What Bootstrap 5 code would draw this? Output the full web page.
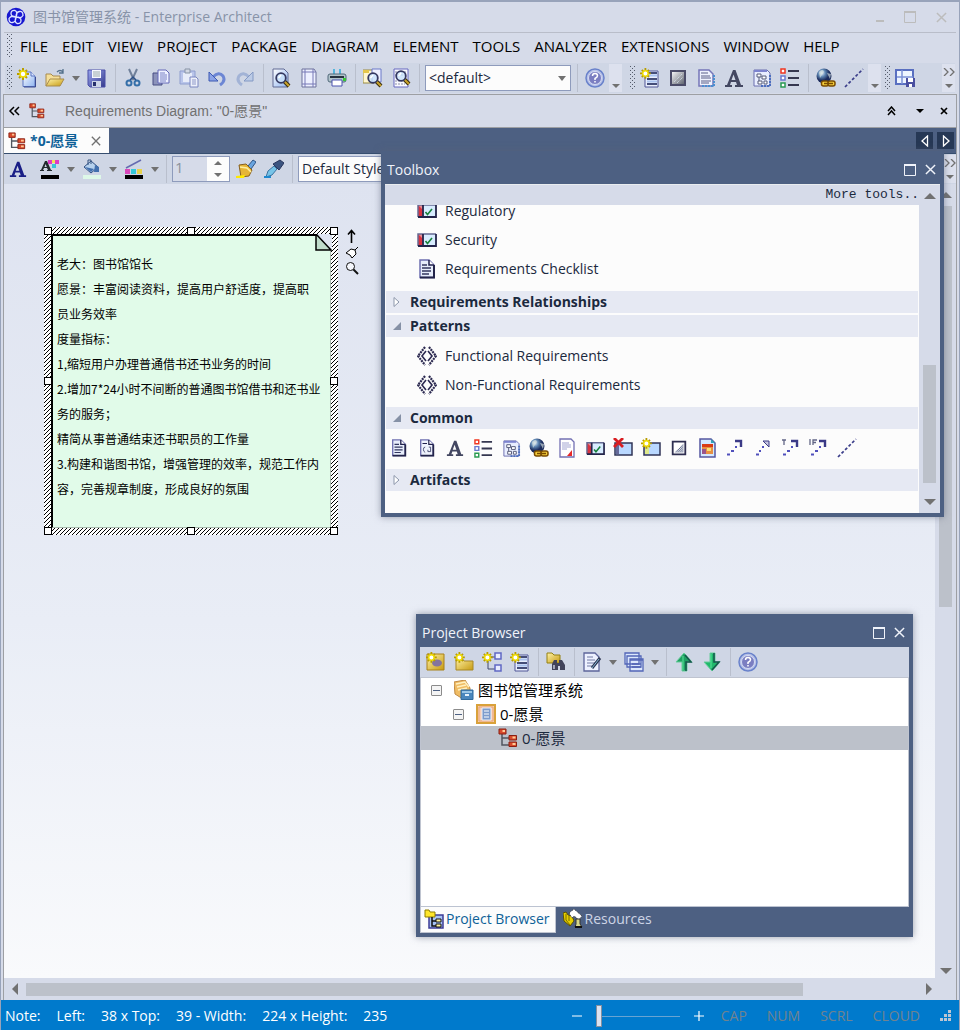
<!DOCTYPE html>
<html lang="zh-CN">
<head>
<meta charset="utf-8">
<meta name="viewport" content="width=device-width, initial-scale=1">
<title>图书馆管理系统 - Enterprise Architect</title>
<link href="https://cdn.jsdelivr.net/npm/bootstrap@5.3.0/dist/css/bootstrap.min.css" rel="stylesheet">
<style>
:root{--navy:#4d6082;--bar:#d6dbe9;--tool:#cfd6e5;--ink:#1b293e;--thumb:#bcc1ca;--line:#8e9bbc}
body{font-family:"Open Sans","Noto Sans CJK SC",sans-serif;font-size:14px;line-height:20px;color:#000;background:var(--bar);min-height:100vh;border:solid #98a3ba;border-width:2px 1px 0}
a{color:inherit;text-decoration:none}
button{font:inherit;color:inherit;padding:0;border:0;background:none;display:flex;align-items:center;justify-content:center}
svg{display:block;flex:none}
.ico{width:20px;height:20px}
.app-title{height:30px;padding:0 9px 0 2px;color:#8893a8;gap:7px;margin:0 3px}
.app-title button{color:#bcbcbc}
.title-btns{gap:20px}
.menu-bar{height:29px;margin:0 3px;border-top:1px solid #b9bdc9;padding:0 0 2px 3px;font-size:15px}
.menu-bar a{margin-right:14px}
.menu-bar .grip{margin-right:7px}
.grip{width:6px;height:24px;background:url("data:image/svg+xml,%3Csvg xmlns='http://www.w3.org/2000/svg' width='4' height='4'%3E%3Cpath fill='%23555c6b' d='M0 0h1v1H0zM2 2h1v1H2z'/%3E%3C/svg%3E");flex:none}
.tool-bar{height:30px;background:var(--tool)}
.main-tools{margin:2px 4px 1px;padding-left:2px}
.tb{width:28px;height:26px;flex:none}
.arr{width:14px;height:26px;flex:none}
.arr::after,.combo::after{content:"";border:4px solid transparent;border-top:5px solid #717171;border-bottom:0}
.vsep{width:8px;height:28px;flex:none;background:linear-gradient(#b9bfcd,#b9bfcd) center/1px 100% no-repeat}
.over{width:13px;height:28px;background:#dde1ee;flex:none;flex-direction:column;justify-content:space-between;padding:4px 0}
.combo{position:relative;margin:0 2px}
.combo::after{position:absolute;right:5px;top:11px}
.combo select{appearance:none;width:100%;height:26px;border:1px solid var(--line);background:#fcfcfc;color:var(--ink);padding:0 3px;border-radius:0;line-height:20px}
.crumb{height:34px;margin:0 2px 0 2px;border:1px solid #9d9fa3;font-family:"Liberation Sans","Noto Sans CJK SC",sans-serif;color:#717171}
.crumb button{color:#000;height:24px}
.work{margin:0 2px;border-left:1px solid #9d9fa3;border-right:1px solid #9d9fa3}
.tab-strip{height:26px;background:var(--navy);border-bottom:1px solid #364e6f;padding-right:2px}
.doc-tab{height:25px;width:105px;background:#fcfcfc;color:#0e6198;font-weight:bold}
.tab-nav{width:17px;height:17px;background:#263855}
.canvas{background:linear-gradient(#dee3f0,#e9edf6 55%,#f9fafc);min-height:600px;padding:43px 40px}
.note-frame{position:relative;width:294px;padding:7px;background:url("data:image/svg+xml,%3Csvg xmlns='http://www.w3.org/2000/svg' width='4' height='4'%3E%3Crect width='4' height='4' fill='white'/%3E%3Cpath d='M3 0h1v1H3zM2 1h1v1H2zM1 2h1v1H1zM0 3h1v1H0z'/%3E%3C/svg%3E")}
.note-body{background:#e1fbe9;border:1px solid #a8b9ae;border-left:2px solid #000;border-top:2px solid #000;padding:15px 0 26px 4px;font-size:12px;line-height:25px;white-space:nowrap;font-family:"Noto Sans CJK SC",sans-serif}
.fold{position:absolute;right:6px;top:7px}
.knob{position:absolute;width:8px;height:8px;background:#fff;border:1px solid #000}
.n{top:0}.s{bottom:0}.w{left:0}.e{right:0}.cx{left:calc(50% - 4px)}.cy{top:calc(50% - 4px)}
.quick{margin-left:7px;gap:2px;padding-top:2px}
.sbar{background:var(--bar);color:#717171;flex:none}
.sbar i{background:var(--thumb);display:block}
.win{position:absolute;background:var(--navy);padding:0 4px 4px;box-shadow:0 0 7px #5a637799;display:flex;flex-direction:column}
.win-title{height:33px;color:#f0f3fa;padding-left:2px;flex:none}
.win-title button{width:20px;height:20px}
.toolbox{left:377px;right:12px;top:23px;height:366px}
.browser{left:412px;width:497px;top:486px;height:323px}
.tools-head{height:20px;z-index:1;background:var(--bar);font-family:"Liberation Mono",monospace;font-size:13px;color:var(--ink)}
.first-group{margin-top:-9px}
.group-head{height:22px;background:#e6e9f3;font-weight:bold;margin:0 1px 2px;gap:9px;padding:0 0 1px 7px}
.group-head svg{width:8px;height:12px;overflow:visible}
.stencil{height:29px;gap:8px;padding-left:32px}
.common-row{height:34px}
.tree{background:#fff;border:1px solid #bfc4d0;border-bottom-color:#bcc3d1}
.tree-row{height:24px;font-size:15px}
.minus{width:11px;height:11px;border:1px solid #8b8b8b;border-radius:1px;background:linear-gradient(var(--navy),var(--navy)) center/7px 1px no-repeat,#f4f4f4}
.win-tab{height:26px;padding:0 5px 2px 3px;gap:2px;color:#cdd5e6}
.win-tab.on{background:#fcfcfc;color:#0e6198;border:1px solid #bfc4d0;border-top:0}
.status{height:30px;background:#007acc;color:#fff;padding:2px 0 0 5px;margin:0 -1px}
.lock{color:#71838f;gap:20px;margin:0 20px 0 17px}
.zoom{appearance:none;width:84px;height:22px;background:linear-gradient(#68a4d2,#68a4d2) center/100% 1px no-repeat;margin:0 14px}
.zoom::-webkit-slider-thumb{appearance:none;width:6px;height:22px;background:#dce2f0;border:1px solid #858f9f;border-radius:0}
.spin{width:58px;height:26px;border:1px solid var(--line);background:#fcfcfc;margin:0 2px}
.spin input{width:34px;border:0;background:var(--bar);color:#8c929c;padding:0 0 4px 2px;font-size:15px;line-height:20px;border-radius:0}
</style>
</head>
<body class="d-flex flex-column">
<svg width="0" height="0" class="position-absolute" aria-hidden="true">
<defs>
<linearGradient id="gb" x2="1" y2="1"><stop stop-color="#fff"/><stop offset="1" stop-color="#8fb4f0"/></linearGradient>
<linearGradient id="gv" x2="1" y2="1"><stop stop-color="#9aa6ee"/><stop offset="1" stop-color="#34398c"/></linearGradient>
<linearGradient id="gy" x2="1" y2="1"><stop stop-color="#fff3a8"/><stop offset="1" stop-color="#c79b12"/></linearGradient>
<linearGradient id="gg" x2="1" y2="1"><stop stop-color="#fff"/><stop offset="1" stop-color="#555a66"/></linearGradient>
<radialGradient id="gl" cx=".35" cy=".3"><stop stop-color="#e8f2ff"/><stop offset=".5" stop-color="#5c84b0"/><stop offset="1" stop-color="#1b2b5c"/></radialGradient>
<pattern id="dots" width="2" height="2" patternUnits="userSpaceOnUse"><path d="M0 0h1v1H0zM1 1h1v1H1z" fill="#4e5b80"/></pattern>
</defs>
<symbol id="star" viewBox="0 0 20 20"><path d="M6 0v12M0 6h12M2 2l8 8M10 2l-8 8" stroke="#b89e00" stroke-width="2"/><circle cx="6" cy="6" r="3" fill="#fff" stroke="#f0dc00" stroke-width="1.6"/></symbol>
<symbol id="new" viewBox="0 0 20 20"><path d="M6 4h8l4 4v10.500H6z" fill="url(#gb)" stroke="#5a74c0"/><path d="M14 4v4h4" fill="#dbe6ff" stroke="#5a74c0"/><path d="M18.500 9v10H7" fill="none" stroke="#3a4a90"/><use href="#star" width="20" height="20"/></symbol>
<symbol id="open" viewBox="0 0 20 20"><path d="M1 18V6h5l2 2h7v3" fill="#f5df9a" stroke="#a88b4c"/><path d="M1 18l4-7h14l-4 7z" fill="url(#gy)" stroke="#a88b4c"/><path d="M12 4q3-3 6 0m0-3v4h-4" fill="none" stroke="#53708b" stroke-width="1.300"/></symbol>
<symbol id="save" viewBox="0 0 20 20"><path d="M1 2h17v17H3l-2-2z" fill="url(#gv)" stroke="#4a4fa8"/><path d="M5 2h9v8H5z" fill="#f6f8ff"/><path d="M6 4h7M6 6h7M6 8h7" stroke="#9aa"/><path d="M5 13h9v6H5z" fill="#cdd5e8"/><path d="M6 14h3v4H6z" fill="#27306d"/></symbol>
<symbol id="cut" viewBox="0 0 20 20"><path d="M6 1l5 11M14 1L9 12" stroke="#70809a" stroke-width="2"/><circle cx="6" cy="15" r="2.500" fill="none" stroke="#356fa9" stroke-width="2"/><circle cx="14" cy="15" r="2.500" fill="none" stroke="#356fa9" stroke-width="2"/><path d="M7 12l3-3 3 3" stroke="#2c4f86" fill="none" stroke-width="1.500"/></symbol>
<symbol id="copy" viewBox="0 0 20 20"><path d="M2 5h9v12H2z" fill="#8c93bb" stroke="#464c82"/><path d="M7 2h8l3 3v10H7z" fill="#eef1ff" stroke="#6468b8"/><path d="M9 5h5M9 7h7M9 9h7M9 11h7M9 13h6" stroke="#7881c5"/></symbol>
<symbol id="paste" viewBox="0 0 20 20"><path d="M1 3h15v13H1z" fill="#b9c5ea" stroke="#8f9ecf"/><path d="M4 5h9v9H4z" fill="#e7ecf9"/><path d="M6 1h5v4H6z" fill="#d2d8e4" stroke="#8793a5"/><path d="M11 9h6l2 2v8h-8z" fill="#edf0fa" stroke="#7a86c0"/><path d="M13 12h4M13 14h4M13 16h4" stroke="#8d97c8"/></symbol>
<symbol id="undo" viewBox="0 0 20 20"><path d="M6 9Q12 3 16 8q3 5-3 9" fill="none" stroke="#6c86d4" stroke-width="3"/><path d="M2 4v9h9z" fill="#8ba3e6" stroke="#3d59b2"/></symbol>
<symbol id="redo" viewBox="0 0 20 20"><path d="M14 9Q8 3 4 8q-3 5 3 9" fill="none" stroke="#a2b3d6" stroke-width="3"/><path d="M18 4v9H9z" fill="#bccbe6" stroke="#8398c4"/></symbol>
<symbol id="lens" viewBox="0 0 20 20"><path d="M13 13l5 5" stroke="#3c3010" stroke-width="4"/><path d="M13 13l5 5" stroke="#c9a32b" stroke-width="2"/><circle cx="10" cy="10" r="4.800" fill="#c8e2fbcc" stroke="#353860" stroke-width="1.800"/><path d="M7.500 10l2.500-3" stroke="#fff" stroke-width="1.500"/></symbol>
<symbol id="preview" viewBox="0 0 20 20"><path d="M2 1h11l4 4v14H2z" fill="url(#gb)" stroke="#606a94"/><use href="#lens" width="20" height="20"/></symbol>
<symbol id="page" viewBox="0 0 20 20"><path d="M3 1h12l2 3v15H3z" fill="#edf0ff" stroke="#6d719a"/><path d="M6 1v18M14 1v18M3 4h14M3 16h14" stroke="#7779b6"/></symbol>
<symbol id="print" viewBox="0 0 20 20"><path d="M6 1h2v6H6zM12 1h2v6h-2z" fill="#54b5dc"/><rect x="1" y="6" width="18" height="8" rx="2" fill="#b0c2ca" stroke="#50697a"/><path d="M3 8h14v2H3z" fill="#26323e"/><path d="M5 12h10v6H5z" fill="#fff" stroke="#4c55b0"/><path d="M16 10h3v3h-3z" fill="#36c834"/></symbol>
<symbol id="find" viewBox="0 0 20 20"><path d="M0 2h11v13H0z" fill="#fff7d0" stroke="#9a8a40"/><path d="M0 2h6v3H0z" fill="#e4c64b"/><path d="M9 1h9v13H9z" fill="#eef0ff" stroke="#6b78c8"/><use href="#lens" width="20" height="20"/></symbol>
<symbol id="finddoc" viewBox="0 0 20 20"><path d="M3 1h14v18H3z" fill="#fafaff" stroke="#6668c0"/><path d="M4 4h12M4 7h12M4 13h12M4 16h10" stroke="#8c90a8" stroke-dasharray="2 1"/><use href="#lens" width="20" height="20" y="-2"/></symbol>
<symbol id="help" viewBox="0 0 20 20"><circle cx="10" cy="10" r="9" fill="#b9c2e7" stroke="#6982cb" stroke-width="1.500"/><circle cx="10" cy="10" r="6.500" fill="#7b7ec1" stroke="#d4ddf5"/><path d="M7.500 8q0-2.500 2.500-2.500t2.500 2.300Q12.500 9 10 10.500V12m0 1v1.600" fill="none" stroke="#fff" stroke-width="1.500"/></symbol>
<symbol id="newlist" viewBox="0 0 20 20"><path d="M6 3h12v16H5V3z" fill="#e9eefc" stroke="#505797"/><path d="M7 5h10M7 11h10M7 16h10" stroke="#454d78" stroke-width="2"/><path d="M7 7.500h10M7 13.500h10" stroke="#a9c2ef" stroke-width="2"/><use href="#star" width="18" height="18"/></symbol>
<symbol id="shade" viewBox="0 0 20 20"><path d="M3 3h14v14H3z" fill="url(#gg)" stroke="#4b4c68" stroke-width="2"/><path d="M6 14l8-8M9 15l6-6" stroke="#d9e7f2" stroke-dasharray="1 1"/></symbol>
<symbol id="shadedot" viewBox="0 0 20 20"><path d="M3 3h14v14H3z" fill="#fff" stroke="#2e2e50" stroke-width="2"/><path d="M5 15L15 5v10z" fill="url(#dots)"/></symbol>
<symbol id="doc" viewBox="0 0 20 20"><path d="M3 2h10l4 4v12H3z" fill="#eef1fd" stroke="#7676b8" stroke-width="1.500"/><path d="M18 7v11H5" fill="none" stroke="#4b8fd0" stroke-width="2" stroke-dasharray="2 1"/><path d="M5 5h7M5 8h9M5 10h10M5 13h10M5 15h8" stroke="#5a5f87"/></symbol>
<symbol id="A" viewBox="0 0 20 20"><path fill-rule="evenodd" d="M9 2h2.500L17 17h2v2h-8v-2h2l-1-3H7l-1 3h2v2H1v-2h2zM7.500 12h4L9.500 6.500z" fill="currentColor"/></symbol>
<symbol id="diag" viewBox="0 0 20 20"><path d="M2 2h13l3 3v13H2z" fill="#e9eeff" stroke="#6b6eae"/><path d="M2 3h13" stroke="#7d84cf" stroke-width="2"/><path d="M18 7v11H9" fill="none" stroke="#4b6fc0" stroke-width="2" stroke-dasharray="2 1"/><path d="M5 6h4v3H5zM10 8h4v3h-4zM6 13h4v3H6zM12 13h3v3h-3zM7 9v4" fill="#fff" stroke="#555a78"/></symbol>
<symbol id="legend" viewBox="0 0 20 20"><path d="M1 1h4v4H1z" fill="#fff" stroke="#f03620" stroke-width="1.500"/><path d="M1 8h4v4H1z" fill="#fff" stroke="#6b79ce" stroke-width="1.500"/><path d="M1 15h4v4H1z" fill="#fff" stroke="#2a9b51" stroke-width="1.500"/><path d="M8 3h11M8 10h11M8 17h11" stroke="#353750" stroke-width="2"/></symbol>
<symbol id="globe" viewBox="0 0 20 20"><circle cx="8" cy="8" r="7.500" fill="url(#gl)"/><path d="M3 4q4-4 5 0l-4 6zM11 5l4 1-1 5z" fill="#d5e2de" opacity=".65"/><rect x="5.500" y="13" width="7" height="5" rx="2" fill="#f3cb38" stroke="#7a4c00" stroke-width="1.500"/><rect x="12" y="13" width="7" height="5" rx="2" fill="#f3cb38" stroke="#7a4c00" stroke-width="1.500"/><path d="M8 15.500h9" stroke="#7a4c00" stroke-width="1.500"/></symbol>
<symbol id="dash" viewBox="0 0 20 20"><path d="M1 19L19 1" stroke="#3b3e8a" stroke-width="1.700" stroke-dasharray="3 2"/></symbol>
<symbol id="layout" viewBox="0 0 20 20"><path d="M1 2h17v14H1z" fill="#eef5ff" stroke="#596fc0" stroke-width="2"/><path d="M7 2v14M2 9h16" stroke="#7d93d8" stroke-width="1.500"/><path d="M11 10h9v9h-9z" fill="#4a4fa0"/><path d="M13 10h5v4h-5zM14 16h3v3h-3z" fill="#fff"/></symbol>
<symbol id="hier" viewBox="0 0 20 20"><path d="M4 6v11h7M4 10h7" stroke="#51565f" stroke-width="1.500" fill="none"/><g fill="#d84a2c" stroke="#8a1f12"><path d="M1 1h7v5H1zM11 7.500h7.500v4.500H11zM11 14h7.500v4.500H11z"/></g><path d="M4.500 2H7v2H4.500zM14.500 8.500h3v2h-3zM14.500 15h3v2h-3z" fill="#ffc996"/></symbol>
<symbol id="bar" viewBox="0 0 20 20"><path d="M1 4h18v12H1z" fill="#d8ecff"/><path d="M1 4h4.500v12H1z" fill="#d93340"/><path d="M1 4h5v5z" fill="#e68e98"/><path d="M1 16V4h18" fill="none" stroke="#666a92" stroke-width="1.500"/><path d="M19 4v12H1M6 4v12" fill="none" stroke="#23244a" stroke-width="1.800"/><path d="M8.500 11l2 2.500L15 8" fill="none" stroke="#16803a" stroke-width="1.600"/></symbol>
<symbol id="check" viewBox="0 0 20 20"><path d="M3 1h9l5 5v12.500H3z" fill="#e7edfb" stroke="#6e6fb0" stroke-width="1.500"/><path d="M17 6v12.500H3" fill="none" stroke="#23244a" stroke-width="2"/><path d="M12 1v5h5" fill="#fff" stroke="#20214c" stroke-width="1.500"/><path d="M5 6h5M5 9h9M5 12h9M5 15h7" stroke="#33365f" stroke-width="1.300"/></symbol>
<symbol id="docx" viewBox="0 0 20 20"><path d="M3 1h9l5 5v12.500H3z" fill="#eff3fd" stroke="#6e6fb0" stroke-width="1.500"/><path d="M17 6v12.500H3" fill="none" stroke="#23244a" stroke-width="2"/><path d="M12 1v5h5M5 5h5" fill="#fff" stroke="#20214c" stroke-width="1.300"/><path d="M8 9q-2 0-2 2.500T8 15M12 9h2v5h-3v-2" fill="none" stroke="#45496e"/></symbol>
<symbol id="pattern" viewBox="0 0 20 20"><path d="M8 1L1 10l7 9M12 1l7 9-7 9" fill="none" stroke="#2b2950" stroke-width="2.200" stroke-dasharray="2 .8"/><path d="M9 5l-4 5 4 5M11 5l4 5-4 5" fill="none" stroke="#2b2950" stroke-width="1.600"/></symbol>
<symbol id="pdf" viewBox="0 0 20 20"><path d="M3 1h11l3 3v15H3z" fill="#fff" stroke="#7370b3" stroke-width="1.300"/><path d="M5 5h7M5 7h9M5 9h9M5 11h5" stroke="#a2a5d2"/><path d="M10 18l5-6v6z" fill="#e62828"/></symbol>
<symbol id="change" viewBox="0 0 20 20"><path d="M2 5h17v12H2z" fill="#b9d8ff" stroke="#303557" stroke-width="1.500"/><path d="M3 6h3v10H3z" fill="#666a9a"/><path d="M1 0l9 9M10 0L1 9" stroke="#d81d21" stroke-width="2.800"/></symbol>
<symbol id="issue" viewBox="0 0 20 20"><path d="M3 5h16v12H3z" fill="#b9d8ff" stroke="#303557" stroke-width="1.500"/><path d="M4 8h4v8H4z" fill="#dfe98a"/><use href="#star" width="18" height="18"/></symbol>
<symbol id="pic" viewBox="0 0 20 20"><path d="M3 1h11l4 4v14H3z" fill="#d3e9ff" stroke="#5557a0" stroke-width="1.500"/><path d="M5 6h11v10H5z" fill="#e89042"/><path d="M5 6h11v3H5z" fill="#d93c13"/><path d="M5 11h4v5H5z" fill="#99558a"/><path d="M10 10h4v3h-4z" fill="#f8e173"/><path d="M14 1v4h4z" fill="#35a5b8"/></symbol>
<symbol id="link" viewBox="0 0 20 20"><path d="M2 16.500h3M6 13h3M10 9h2" stroke="#5050bc" stroke-width="2.200"/><path d="M10 3h6v6" fill="none" stroke="#3b3a86" stroke-width="2.400"/></symbol>
<symbol id="linkopen" viewBox="0 0 20 20"><path d="M3 16.500h3M6 13h2M9 9h2" stroke="#5050bc" stroke-width="2"/><path d="M10 3h6v6z" fill="#c6c6df" stroke="#3b3a86"/></symbol>
<symbol id="t" viewBox="0 0 20 20"><path d="M1 2h4M3 2v5" stroke="#626686" stroke-width="1.300"/><use href="#link" width="20" height="20"/></symbol>
<symbol id="if" viewBox="0 0 20 20"><path d="M1 1v6M4 7V2h4M4 4.500h3" fill="none" stroke="#626686" stroke-width="1.300"/><use href="#link" width="20" height="20"/></symbol>
<symbol id="model" viewBox="0 0 20 20"><path d="M1 2h17v16H1z" fill="url(#gy)" stroke="#aa8118"/><ellipse cx="11" cy="11" rx="5" ry="3.500" fill="#84749e"/><use href="#star" width="18" height="18"/></symbol>
<symbol id="pkg" viewBox="0 0 20 20"><path d="M2 18V6h6l2 3h9v9z" fill="url(#gy)" stroke="#a98825"/><use href="#star" width="18" height="18"/></symbol>
<symbol id="newdiag" viewBox="0 0 20 20"><path d="M6 9v8h7M8 5h5" fill="none" stroke="#41496c"/><path d="M13 1h6v6h-6zM13 13h6v6h-6z" fill="#e9edff" stroke="#6068c4" stroke-width="1.500"/><use href="#star" width="18" height="18"/></symbol>
<symbol id="bino" viewBox="0 0 20 20"><path d="M1 11V1h5l2 2h6v8z" fill="url(#gy)" stroke="#948011"/><path d="M6 18V12l2-4h3v3h2V8h3l3 5v5h-5v-4h-2v4z" fill="#41435a"/><path d="M7 13h2v4H7z" fill="#a2a7ba"/></symbol>
<symbol id="edit" viewBox="0 0 20 20"><path d="M2 1h11l4 4v14H2z" fill="#edf1ff" stroke="#5d659a" stroke-width="1.300"/><path d="M5 5h6M5 8h8M5 11h8M5 14h6" stroke="#727aa4"/><path d="M10 16l8-10" stroke="#2d3652" stroke-width="3"/><path d="M10 16l7-9" stroke="#85b4d2"/></symbol>
<symbol id="wins" viewBox="0 0 20 20"><g fill="#dbe7fc" stroke="#5366b7" stroke-width="1.300"><path d="M1 1h14v11H1zM3 4h14v11H3zM6 7h13v12H6z"/></g><path d="M6 8h13M8 12h9M8 15h9" stroke="#5366b7" stroke-width="1.600"/></symbol>
<symbol id="up" viewBox="0 0 20 20"><path d="M10 1l8 9h-5v9H8v-9H2z" fill="#20a163" stroke="#67cd9b"/><path d="M11 3l6 7h-5v9" fill="none" stroke="#16564c" stroke-width="1.500"/><path d="M9 4v14" stroke="#5be49b"/></symbol>
<symbol id="down" viewBox="0 0 20 20"><path d="M10 19l8-9h-5V1H8v9H2z" fill="#20b96b" stroke="#67cd9b"/><path d="M10 18l7-8h-5V1" fill="none" stroke="#16564c" stroke-width="1.500"/><path d="M9 2v14" stroke="#5be49b"/></symbol>
<symbol id="cabinet" viewBox="0 0 20 20"><path d="M0 2l11-2 5 8v3H9v8L1 14z" fill="#f0bd65" stroke="#c08a42"/><path d="M2 4l9-2 4 5M3 7l9-2M4 10l9-2" fill="none" stroke="#fff0c0" stroke-width="1.500"/><path d="M7 10h12v9.500H7z" fill="#4a87bd" stroke="#316b9c"/><path d="M8 11h10v2H8z" fill="#9ac6e6"/><path d="M11 14h4v2h-4z" fill="#e5f2fb"/></symbol>
<symbol id="view" viewBox="0 0 20 20"><path d="M1 1h18v18H1z" fill="#f7cba8" stroke="#d9a13a" stroke-width="2"/><path d="M3 3h14v14H3z" fill="#f9cdb4" stroke="#e7a57b"/><path d="M6 4h9v12H6z" fill="#7d9ccc" stroke="#e9f0fa"/><path d="M8 7h5M8 10h5M8 13h5" stroke="#fff"/></symbol>
<symbol id="ptab" viewBox="0 0 20 20"><path d="M5 6h14v13H5z" fill="#a8c4f5" stroke="#3c3b95" stroke-width="1.500"/><path d="M1 8V1h4l1 2h5v5z" fill="#ffe62a" stroke="#8f7e00"/><path d="M8 8v9h6M8 12h6" stroke="#101010" fill="none" stroke-width="1.500"/><path d="M12 10h5v3h-5zM12 15h5v3h-5z" fill="#fff5a0" stroke="#111"/></symbol>
<symbol id="res" viewBox="0 0 20 20"><path d="M0 4l3-1 2 3 4 1 2 5-4 5-6-5z" fill="#e6cf00" stroke="#5c5200"/><path d="M3 5v6l4 5M6 7v5" stroke="#7c6c00" fill="none"/><path d="M6 4l5-4 8 7-3 4-5-4-2 2z" fill="#fff" stroke="#333" stroke-dasharray="1 1"/><path d="M13 10h4v5l2 3h-7l1-3z" fill="#d5d68a" stroke="#333"/><path d="M12 18h7" stroke="#111" stroke-width="2"/></symbol>
<symbol id="fontcol" viewBox="0 0 20 20"><path fill-rule="evenodd" d="M5 2h2l4 9h1v1H7v-1h1l-1-2H4l-1 2h1v1H0v-1h1zM4.500 8h2.300L5.600 5z" fill="#222a2d"/><path d="M8 1h4v4H8zM15 1h4v4h-4z" fill="#dc3bc6"/><path d="M12 5h4v4h-4z" fill="#38c5d7"/><path d="M12 1h3v3h-3z" fill="#f3df51"/><path d="M1 16h18v4H1z" fill="#000"/></symbol>
<symbol id="fill" viewBox="0 0 20 20"><path d="M2 8l7-6 7 6-7 6z" fill="#b6d1ed" stroke="#315082"/><path d="M3 8l6 5 3-3zM13 6l4 2v5h-5z" fill="#416fae"/><path d="M6 6V1h3v4" fill="none" stroke="#34537e"/><path d="M1 16h18v4H1z" fill="#def8e8"/></symbol>
<symbol id="linecol" viewBox="0 0 20 20"><path d="M2 9L17 1" stroke="#656ab1" stroke-width="1.500"/><path d="M1 10h5v5H1z" fill="#d948ba"/><path d="M7 10h5v5H7z" fill="#35c8d9"/><path d="M13 10h5v5h-5z" fill="#e6d24c"/><path d="M1 16h18v4H1z" fill="#000"/></symbol>
<symbol id="brush" viewBox="0 0 20 20"><path d="M12 7l5-6 3 2-5 7z" fill="#69a4df" stroke="#315787"/><path d="M3 6l7-1 6 6-3 6-8 1z" fill="#e6b536" stroke="#876020"/><path d="M4 8l7 1 4 4" fill="none" stroke="#fff0a0" stroke-width="1.500"/><path d="M0 17l9-1-1 3H0z" fill="#ffea00"/></symbol>
<symbol id="drop" viewBox="0 0 20 20"><path d="M2 18l2-6 6-5 3 3-5 6z" fill="#77c4e8" stroke="#3b73a0"/><path d="M9 5l7-4 4 3-5 7z" fill="#3b5480" stroke="#28355c"/><path d="M0 18h7" stroke="#1e88ce" stroke-width="2"/></symbol>
<symbol id="logo" viewBox="0 0 20 20"><circle cx="10" cy="10" r="9.300" fill="#1717d0"/><g fill="none" stroke="#dfe4ff" stroke-width="1.300"><path d="M10 10Q5 10 5 6.500T9 3.500Q12 5 10 10Q10 5 13.500 4.500T17 8.500Q15 12 10 10Q15 10 15 13.500T11 16.500Q8 15 10 10Q10 15 6.500 15.500T3 11.500Q5 8 10 10"/></g></symbol>
<symbol id="x" viewBox="0 0 12 12"><path d="M1 1l10 10M11 1L1 11" stroke="currentColor" stroke-width="1.600"/></symbol>
<symbol id="max" viewBox="0 0 12 12"><path d="M.500 1h11v10.500H.500z" fill="none" stroke="currentColor"/><path d="M0 1h12" stroke="currentColor" stroke-width="2"/></symbol>
<symbol id="more" viewBox="0 0 12 8"><path d="M1 0l4 4-4 4M7 0l4 4-4 4" fill="none" stroke="#717171" stroke-width="1.300"/></symbol>
<symbol id="tri" viewBox="0 0 12 6"><path d="M0 0h12L6 6z" fill="currentColor"/></symbol>
<symbol id="triup" viewBox="0 0 12 6"><path d="M0 6h12L6 0z" fill="currentColor"/></symbol>
<symbol id="closed" viewBox="0 0 8 12"><path d="M1 1.500l5 4.500-5 4.500z" fill="#fff" stroke="#8d97ab"/></symbol>
<symbol id="opened" viewBox="0 0 8 12"><path d="M8 2v8H0z" fill="#8691a6"/></symbol>
</svg>

<header>
<div class="app-title d-flex align-items-center">
<svg class="ico"><use href="#logo"/></svg><span>图书馆管理系统 - Enterprise Architect</span>
<div class="title-btns d-flex ms-auto">
<button aria-label="Minimize"><svg width="8" height="12"><path d="M0 10h8" stroke="currentColor" stroke-width="2"/></svg></button>
<button aria-label="Maximize"><svg width="12" height="12"><use href="#max"/></svg></button>
<button aria-label="Close"><svg width="11" height="11"><use href="#x"/></svg></button>
</div>
</div>
<nav class="menu-bar d-flex align-items-center" aria-label="Main menu">
<span class="grip"></span>
<a href="#">FILE</a><a href="#">EDIT</a><a href="#">VIEW</a><a href="#">PROJECT</a><a href="#">PACKAGE</a><a href="#">DIAGRAM</a><a href="#">ELEMENT</a><a href="#">TOOLS</a><a href="#">ANALYZER</a><a href="#">EXTENSIONS</a><a href="#">WINDOW</a><a href="#">HELP</a>
</nav>
<div class="tool-bar main-tools d-flex align-items-center">
<span class="grip"></span>
<button class="tb" aria-label="New"><svg class="ico"><use href="#new"/></svg></button>
<button class="tb" aria-label="Open"><svg class="ico"><use href="#open"/></svg></button><button class="arr" aria-label="Open options"></button>
<button class="tb" aria-label="Save"><svg class="ico"><use href="#save"/></svg></button>
<span class="vsep"></span>
<button class="tb" aria-label="Cut"><svg class="ico"><use href="#cut"/></svg></button>
<button class="tb" aria-label="Copy"><svg class="ico"><use href="#copy"/></svg></button>
<button class="tb" aria-label="Paste"><svg class="ico"><use href="#paste"/></svg></button>
<button class="tb" aria-label="Undo"><svg class="ico"><use href="#undo"/></svg></button>
<button class="tb" aria-label="Redo"><svg class="ico"><use href="#redo"/></svg></button>
<span class="vsep"></span>
<button class="tb" aria-label="Preview"><svg class="ico"><use href="#preview"/></svg></button>
<button class="tb" aria-label="Page setup"><svg class="ico"><use href="#page"/></svg></button>
<button class="tb" aria-label="Print"><svg class="ico"><use href="#print"/></svg></button>
<span class="vsep"></span>
<button class="tb" aria-label="Find in project"><svg class="ico"><use href="#find"/></svg></button>
<button class="tb" aria-label="Find in files"><svg class="ico"><use href="#finddoc"/></svg></button>
<span class="vsep"></span>
<label class="combo" style="width:146px"><select aria-label="Perspective"><option>&lt;default&gt;</option></select></label>
<span class="vsep"></span>
<button class="tb" aria-label="Help"><svg class="ico"><use href="#help"/></svg></button>
<button class="over me-1" aria-label="Toolbar options"><span></span><svg width="8" height="4"><use href="#tri" color="#717171"/></svg></button>
<span class="grip ms-1"></span>
<button class="tb" aria-label="New element"><svg class="ico"><use href="#newlist"/></svg></button>
<button class="tb" aria-label="Boundary"><svg class="ico"><use href="#shade"/></svg></button>
<button class="tb" aria-label="Note"><svg class="ico"><use href="#doc"/></svg></button>
<button class="tb" aria-label="Text"><svg class="ico" color="#434761"><use href="#A"/></svg></button>
<button class="tb" aria-label="Diagram note"><svg class="ico"><use href="#diag"/></svg></button>
<button class="tb" aria-label="Legend"><svg class="ico"><use href="#legend"/></svg></button>
<span class="vsep"></span>
<button class="tb" aria-label="Hyperlink"><svg class="ico"><use href="#globe"/></svg></button>
<button class="tb" aria-label="Note link"><svg class="ico"><use href="#dash"/></svg></button>
<button class="over me-1" aria-label="Toolbar options"><span></span><svg width="8" height="4"><use href="#tri" color="#717171"/></svg></button>
<span class="grip"></span>
<button class="tb" aria-label="Layout"><svg class="ico"><use href="#layout"/></svg></button>
<button class="over ms-auto" aria-label="More"><svg width="12" height="8"><use href="#more"/></svg><svg width="8" height="4"><use href="#tri" color="#717171"/></svg></button>
</div>
</header>

<div class="crumb d-flex align-items-center">
<button class="ms-1" aria-label="Back"><svg width="13" height="10"><path d="M6 1L2 5l4 4M11 1L7 5l4 4" fill="none" stroke="#000" stroke-width="1.500"/></svg></button>
<svg class="ms-2 me-3" width="16" height="16"><use href="#hier"/></svg>
<span class="ms-1">Requirements Diagram: "0-愿景"</span>
<div class="d-flex ms-auto gap-3 pe-2">
<button aria-label="Collapse"><svg width="9" height="10"><path d="M1 5l3.500-4L8 5M1 9l3.500-4L8 9" fill="none" stroke="#000" stroke-width="1.500"/></svg></button>
<button class="ms-1" aria-label="Options"><svg width="8" height="4"><use href="#tri"/></svg></button>
<button aria-label="Close view"><svg width="8" height="8"><path d="M1 1l6 6M7 1L1 7" stroke="#000" stroke-width="1.700"/></svg></button>
</div>
</div>

<main class="work position-relative d-flex flex-column flex-grow-1">
<div class="tab-strip d-flex align-items-center">
<a href="#" class="doc-tab d-flex align-items-center gap-1 ps-1"><svg width="18" height="18"><use href="#hier"/></svg>*0-愿景<svg class="ms-auto me-2" width="10" height="10" color="#717171"><use href="#x"/></svg></a>
<button class="tab-nav ms-auto" aria-label="Previous tab"><svg width="8" height="12"><path d="M6.500 1v10L1 6z" fill="none" stroke="#fff" stroke-width="1.300"/></svg></button>
<button class="tab-nav ms-1" aria-label="Next tab"><svg width="8" height="12"><path d="M1.500 1v10L7 6z" fill="none" stroke="#fff" stroke-width="1.300"/></svg></button>
</div>
<div class="tool-bar d-flex align-items-center">
<button class="tb me-1" aria-label="Font"><svg width="18" height="18" color="#1a1f86"><use href="#A"/></svg></button>
<button class="tb" aria-label="Font colour"><svg class="ico"><use href="#fontcol"/></svg></button><button class="arr" aria-label="Font colours"></button>
<button class="tb" aria-label="Fill"><svg class="ico"><use href="#fill"/></svg></button><button class="arr" aria-label="Fill colours"></button>
<button class="tb" aria-label="Line colour"><svg class="ico"><use href="#linecol"/></svg></button><button class="arr" aria-label="Line colours"></button>
<span class="vsep"></span>
<div class="spin d-flex"><input type="text" value="1" aria-label="Line width"><div class="d-flex flex-column flex-grow-1 justify-content-around align-items-center"><button aria-label="Increase"><svg width="8" height="4" color="#717171"><use href="#triup"/></svg></button><button aria-label="Decrease"><svg width="8" height="4" color="#717171"><use href="#tri"/></svg></button></div></div>
<button class="tb" aria-label="Apply style"><svg class="ico"><use href="#brush"/></svg></button>
<button class="tb" aria-label="Pick style"><svg class="ico"><use href="#drop"/></svg></button>
<span class="vsep"></span>
<label class="combo" style="width:150px"><select aria-label="Style"><option>Default Style</option></select></label>
<button class="over ms-auto" aria-label="More"><svg width="12" height="8"><use href="#more"/></svg><svg width="8" height="4"><use href="#tri" color="#717171"/></svg></button>
</div>
<div class="d-flex flex-grow-1">
<section class="canvas d-flex align-items-start flex-grow-1" aria-label="Diagram">
<article class="note-frame">
<div class="note-body">老大：图书馆馆长<br>愿景：丰富阅读资料，提高用户舒适度，提高职<br>员业务效率<br>度量指标：<br>1,缩短用户办理普通借书还书业务的时间<br>2.增加7*24小时不间断的普通图书馆借书和还书业<br>务的服务；<br>精简从事普通结束还书职员的工作量<br>3.构建和谐图书馆，增强管理的效率，规范工作内<br>容，完善规章制度，形成良好的氛围</div>
<svg class="fold" width="17" height="17"><path d="M1 0h16v16z" fill="#dfe4f1"/><path d="M1 0v16h15z" fill="#c0dccb" stroke="#000" stroke-width="1.500"/></svg>
<i class="knob n w"></i><i class="knob n cx"></i><i class="knob n e"></i><i class="knob cy w"></i><i class="knob cy e"></i><i class="knob s w"></i><i class="knob s cx"></i><i class="knob s e"></i>
</article>
<div class="quick d-flex flex-column">
<button aria-label="Link"><svg width="14" height="14"><path d="M6.500 14V2M3 5.500L6.500 1.500 10 5.500" fill="none" stroke="#000" stroke-width="1.600"/></svg></button>
<button aria-label="Style"><svg width="14" height="14"><path d="M1 8l5-4 4 1 1 4-4 4-2-3zM10 5l3-3" fill="#fff" stroke="#000"/></svg></button>
<button aria-label="Zoom"><svg width="14" height="14"><circle cx="5.500" cy="5.500" r="4" fill="#f5f7fc" stroke="#111"/><path d="M8.500 8.500L13 13" stroke="#111" stroke-width="2"/></svg></button>
</div>
</section>
<div class="sbar d-flex flex-column align-items-center pt-2" style="width:21px"><svg width="12" height="6"><use href="#triup"/></svg><i class="mt-2" style="width:13px;height:51%"></i><svg class="mt-auto mb-1" width="12" height="6"><use href="#tri"/></svg></div>
</div>
<div class="sbar d-flex align-items-center px-2" style="height:22px"><svg width="6" height="12"><path d="M6 0v12L0 6z" fill="currentColor"/></svg><i class="ms-2" style="width:83%;height:13px"></i><svg class="ms-auto me-3" width="6" height="12"><path d="M0 0v12l6-6z" fill="currentColor"/></svg></div>

<section class="win toolbox" aria-label="Toolbox">
<div class="win-title d-flex align-items-center pt-1"><span class="me-auto">Toolbox</span><button aria-label="Maximize"><svg width="12" height="12"><use href="#max"/></svg></button><button aria-label="Close"><svg width="11" height="11"><use href="#x"/></svg></button></div>
<div class="d-flex flex-grow-1 border-top border-secondary-subtle" style="background:#fcfcfc;color:var(--ink)">
<div class="flex-grow-1">
<div class="tools-head text-end position-relative"><a href="#">More tools..</a></div>
<div class="first-group">
<div class="stencil d-flex align-items-center"><svg class="ico"><use href="#bar"/></svg>Regulatory</div>
<div class="stencil d-flex align-items-center"><svg class="ico"><use href="#bar"/></svg>Security</div>
<div class="stencil d-flex align-items-center mb-2"><svg class="ico"><use href="#check"/></svg>Requirements Checklist</div>
</div>
<div class="group-head d-flex align-items-center"><svg><use href="#closed"/></svg>Requirements Relationships</div>
<div class="group-head d-flex align-items-center"><svg><use href="#opened"/></svg>Patterns</div>
<div class="stencil d-flex align-items-center mt-1"><svg class="ico"><use href="#pattern"/></svg>Functional Requirements</div>
<div class="stencil d-flex align-items-center mb-2"><svg class="ico"><use href="#pattern"/></svg>Non-Functional Requirements</div>
<div class="group-head d-flex align-items-center"><svg><use href="#opened"/></svg>Common</div>
<div class="common-row d-flex align-items-center mb-1">
<button class="tb" aria-label="Note"><svg width="18" height="18"><use href="#check"/></svg></button>
<button class="tb" aria-label="Artifact"><svg width="18" height="18"><use href="#docx"/></svg></button>
<button class="tb" aria-label="Text"><svg width="18" height="18" color="#434761"><use href="#A"/></svg></button>
<button class="tb" aria-label="Legend"><svg width="19" height="19"><use href="#legend"/></svg></button>
<button class="tb" aria-label="Diagram"><svg width="19" height="19"><use href="#diag"/></svg></button>
<button class="tb" aria-label="Hyperlink"><svg width="20" height="20"><use href="#globe"/></svg></button>
<button class="tb" aria-label="Document"><svg width="20" height="20"><use href="#pdf"/></svg></button>
<button class="tb" aria-label="Requirement"><svg width="19" height="19"><use href="#bar"/></svg></button>
<button class="tb" aria-label="Issue"><svg width="20" height="20"><use href="#change"/></svg></button>
<button class="tb" aria-label="Change"><svg width="20" height="20"><use href="#issue"/></svg></button>
<button class="tb" aria-label="Boundary"><svg width="18" height="18"><use href="#shadedot"/></svg></button>
<button class="tb" aria-label="Image"><svg width="20" height="20"><use href="#pic"/></svg></button>
<button class="tb" aria-label="Dependency"><svg width="20" height="20"><use href="#link"/></svg></button>
<button class="tb" aria-label="Realize"><svg width="20" height="20"><use href="#linkopen"/></svg></button>
<button class="tb" aria-label="Trace"><svg width="20" height="20"><use href="#t"/></svg></button>
<button class="tb" aria-label="Information flow"><svg width="20" height="20"><use href="#if"/></svg></button>
<button class="tb" aria-label="Note link"><svg width="20" height="20"><use href="#dash"/></svg></button>
</div>
<div class="group-head d-flex align-items-center"><svg><use href="#closed"/></svg>Artifacts</div>
</div>
<div class="sbar d-flex flex-column align-items-center pt-2" style="width:21px"><svg width="12" height="6"><use href="#triup"/></svg><i class="mt-auto mb-3" style="width:13px;height:37%"></i><svg class="mb-2" width="12" height="6"><use href="#tri"/></svg></div>
</div>
</section>

<section class="win browser" aria-label="Project Browser">
<div class="win-title d-flex align-items-center pt-1"><span class="me-auto">Project Browser</span><button aria-label="Maximize"><svg width="12" height="12"><use href="#max"/></svg></button><button aria-label="Close"><svg width="11" height="11"><use href="#x"/></svg></button></div>
<div class="tool-bar d-flex align-items-center flex-shrink-0" style="padding-left:2px">
<button class="tb" aria-label="New model"><svg class="ico"><use href="#model"/></svg></button>
<button class="tb" aria-label="New package"><svg class="ico"><use href="#pkg"/></svg></button>
<button class="tb" aria-label="New diagram"><svg class="ico"><use href="#newdiag"/></svg></button>
<button class="tb" aria-label="New element"><svg class="ico"><use href="#newlist"/></svg></button>
<span class="vsep"></span>
<button class="tb" aria-label="Search"><svg class="ico"><use href="#bino"/></svg></button>
<span class="vsep"></span>
<button class="tb" aria-label="Documentation"><svg class="ico"><use href="#edit"/></svg></button><button class="arr" aria-label="Documentation options"></button>
<button class="tb" aria-label="Windows"><svg class="ico"><use href="#wins"/></svg></button><button class="arr" aria-label="Window options"></button>
<span class="vsep"></span>
<button class="tb" aria-label="Move up"><svg class="ico"><use href="#up"/></svg></button>
<button class="tb" aria-label="Move down"><svg class="ico"><use href="#down"/></svg></button>
<span class="vsep"></span>
<button class="tb" aria-label="Help"><svg class="ico"><use href="#help"/></svg></button>
</div>
<div class="tree flex-grow-1" role="tree">
<div class="tree-row d-flex align-items-center" role="treeitem" style="padding-left:10px"><i class="minus me-2"></i><svg class="ico mx-1"><use href="#cabinet"/></svg>图书馆管理系统</div>
<div class="tree-row d-flex align-items-center" role="treeitem" style="padding-left:32px"><i class="minus me-2"></i><svg class="ico mx-1"><use href="#view"/></svg>0-愿景</div>
<div class="tree-row d-flex align-items-center" role="treeitem" style="padding-left:73px;background:#bcc1ca;color:var(--ink)"><svg class="ico mx-1"><use href="#hier"/></svg>0-愿景</div>
</div>
<div class="d-flex">
<a href="#" class="win-tab on d-flex align-items-center"><svg class="ico"><use href="#ptab"/></svg>Project Browser</a>
<a href="#" class="win-tab d-flex align-items-center"><svg class="ico ms-1"><use href="#res"/></svg>Resources</a>
</div>
</section>
</main>

<footer class="status d-flex align-items-center">
<div class="d-flex gap-3 me-auto"><span>Note:</span><span>Left:</span><span>38 x Top:</span><span>39 - Width:</span><span>224 x Height:</span><span>235</span></div>
<button aria-label="Zoom out"><svg width="10" height="10"><path d="M0 5h10" stroke="#fff"/></svg></button>
<input class="zoom" type="range" min="0" max="100" value="0" aria-label="Zoom">
<button aria-label="Zoom in"><svg width="10" height="10"><path d="M0 5h10M5 0v10" stroke="#fff" stroke-width="1.200"/></svg></button>
<div class="lock d-flex"><span>CAP</span><span>NUM</span><span>SCRL</span><span>CLOUD</span></div>
<svg class="me-2" width="12" height="12" fill="#bfc6d2"><path d="M8 0h3v3H8zM4 4h3v3H4zM8 4h3v3H8zM0 8h3v3H0zM4 8h3v3H4zM8 8h3v3H8z"/></svg>
</footer>
<script src="https://cdn.jsdelivr.net/npm/bootstrap@5.3.0/dist/js/bootstrap.bundle.min.js"></script>
</body>
</html>
